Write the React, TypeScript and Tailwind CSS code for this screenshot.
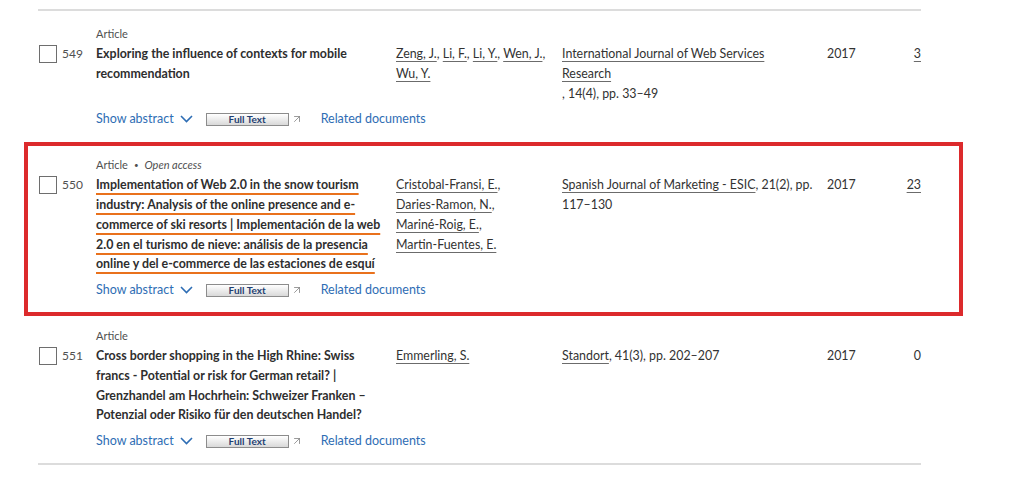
import { ArrowUpRight } from "lucide-react";

type Doc = {
    id: number;
    openAccess?: boolean;
    highlight?: boolean;
    title: string;
    authors: string[];
    source: React.ReactNode;
    year: string;
    cited: string;
    citedLink: boolean;
};

const linkUnderline = "underline decoration-[#6b6b6b] underline-offset-[3px]";

const docs: Doc[] = [
    {
        id: 549,
        title: "Exploring the influence of contexts for mobile recommendation",
        authors: ["Zeng, J.", "Li, F.", "Li, Y.", "Wen, J.", "Wu, Y."],
        source: (
            <>
                <a className={`block ${linkUnderline}`}>
                    International Journal of Web Services Research
                </a>
                <span className="block">, 14(4), pp. 33–49</span>
            </>
        ),
        year: "2017",
        cited: "3",
        citedLink: true,
    },
    {
        id: 550,
        openAccess: true,
        highlight: true,
        title:
            "Implementation of Web 2.0 in the snow tourism industry: Analysis of the online presence and e-commerce of ski resorts | Implementación de la web 2.0 en el turismo de nieve: análisis de la presencia online y del e-commerce de las estaciones de esquí",
        authors: [
            "Cristobal-Fransi, E.",
            "Daries-Ramon, N.",
            "Mariné-Roig, E.",
            "Martin-Fuentes, E.",
        ],
        source: (
            <>
                <a className={linkUnderline}>Spanish Journal of Marketing - ESIC</a>, 21(2), pp.
                117–130
            </>
        ),
        year: "2017",
        cited: "23",
        citedLink: true,
    },
    {
        id: 551,
        title:
            "Cross border shopping in the High Rhine: Swiss francs - Potential or risk for German retail? | Grenzhandel am Hochrhein: Schweizer Franken – Potenzial oder Risiko für den deutschen Handel?",
        authors: ["Emmerling, S."],
        source: (
            <>
                <a className={linkUnderline}>Standort</a>, 41(3), pp. 202–207
            </>
        ),
        year: "2017",
        cited: "0",
        citedLink: false,
    },
];

function DocRow({ doc, first }: { doc: Doc; first?: boolean }) {
    return (
        <div className={`relative flex pb-[14px] ${first ? "pt-[15px]" : "pt-[14px]"}`}>
            {doc.highlight && (
                <div className="pointer-events-none absolute -top-[1px] -bottom-[2px] -left-[14px] -right-[42px] border-[4px] border-[#dc2a2c]" />
            )}

            <div className="flex w-[58px] shrink-0 items-start pt-[18px]">
                <span className="mt-[1px] ml-[1px] h-[18px] w-[18px] shrink-0 border-[1.5px] border-[#6e6e6e] bg-white" />
                <span className="ml-[5px] text-[12px] leading-[20px] text-[#505050]">
                    {doc.id}
                </span>
            </div>

            <div className="flex min-w-0 flex-1 flex-col">
                <div className="flex h-[16px] items-center gap-[6px] text-[11px] leading-[16px] text-[#505050]">
                    <span>Article</span>
                    {doc.openAccess && (
                        <>
                            <span className="text-[8px]">•</span>
                            <span className="italic">Open access</span>
                        </>
                    )}
                </div>

                <div className="mt-[2px] grid grid-cols-[300px_166px_265px_1fr_auto] text-[12.4px] leading-[19.75px] text-[#323232]">
                    <div className="min-w-0 pr-[6px]">
                        <a
                            className={
                                doc.highlight
                                    ? "font-bold text-[#2e2e2e] underline decoration-[#e9711c] decoration-[1.5px] underline-offset-[4px]"
                                    : "font-bold text-[#2e2e2e]"
                            }
                        >
                            {doc.title}
                        </a>
                    </div>
                    <div className="min-w-0 pr-[6px]">
                        {doc.authors.map((a, i) => (
                            <span key={a}>
                                <span className="whitespace-nowrap">
                                    <a className={linkUnderline}>{a}</a>
                                    {i < doc.authors.length - 1 ? "," : ""}
                                </span>{" "}
                            </span>
                        ))}
                    </div>
                    <div className="min-w-0 pr-[12px]">{doc.source}</div>
                    <div>{doc.year}</div>
                    <div className="text-right">
                        {doc.citedLink ? <a className={linkUnderline}>{doc.cited}</a> : doc.cited}
                    </div>
                </div>

                <div className="mt-[6px] flex h-[20px] items-center text-[12.5px] text-[#2e6db4]">
                    <span>Show abstract</span>
                    <svg
                        className="ml-[6px]"
                        width="13"
                        height="8"
                        viewBox="0 0 13 8"
                        fill="none"
                        stroke="currentColor"
                        strokeWidth="1.6"
                    >
                        <polyline points="1,1 6.5,6.5 12,1" />
                    </svg>
                    <span className="ml-[13px] flex h-[13px] w-[83px] items-center justify-center border border-[#8c8c8c] bg-gradient-to-b from-white to-[#d9d9d9] text-[10px] font-bold leading-none text-[#1f3f73]">
                        Full Text
                    </span>
                    <ArrowUpRight className="ml-[2px] h-[12px] w-[12px] text-[#7a7a7a]" strokeWidth={1.5} />
                    <span className="ml-[18px]">Related documents</span>
                </div>
            </div>
        </div>
    );
}

export default function App() {
    return (
        <div className="h-[479px] w-[1024px] bg-white font-['Lato',sans-serif]">
            <div className="ml-[38px] w-[883px] pt-[9px]">
                <div className="h-[2px] bg-[#dcdcdc]" />
                {docs.map((d, i) => (
                    <DocRow key={d.id} doc={d} first={i === 0} />
                ))}
                <div className="-mt-[2px] h-[2px] bg-[#dcdcdc]" />
            </div>
        </div>
    );
}
